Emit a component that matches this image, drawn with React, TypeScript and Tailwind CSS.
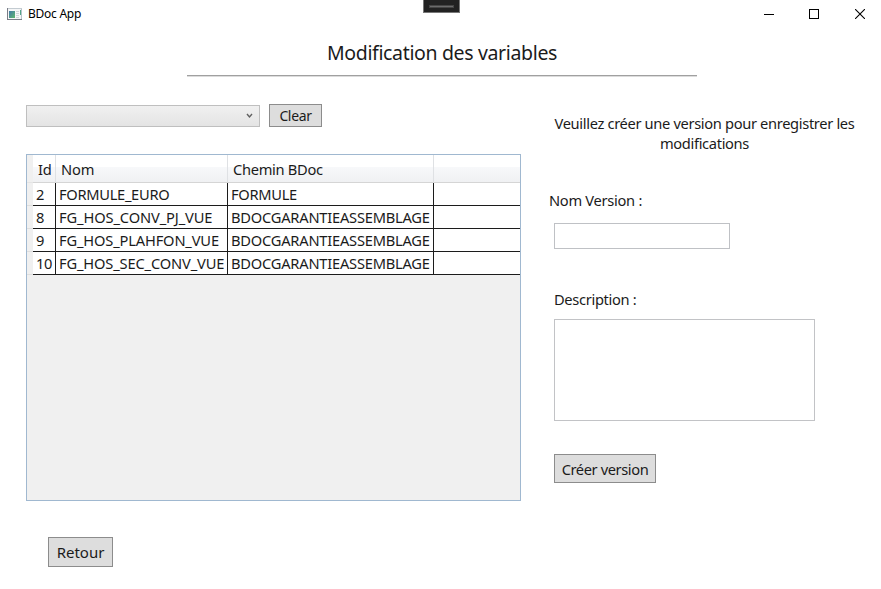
import React from "react";

type Variable = { id: number; nom: string; chemin: string; nomTracking: string; cheminTracking: string };

const variables: Variable[] = [
  { id: 2, nom: "FORMULE_EURO", chemin: "FORMULE", nomTracking: "tracking-[-0.3px]", cheminTracking: "tracking-[-0.3px]" },
  { id: 8, nom: "FG_HOS_CONV_PJ_VUE", chemin: "BDOCGARANTIEASSEMBLAGE", nomTracking: "tracking-[-0.12px]", cheminTracking: "tracking-[-0.22px]" },
  { id: 9, nom: "FG_HOS_PLAHFON_VUE", chemin: "BDOCGARANTIEASSEMBLAGE", nomTracking: "tracking-[-0.16px]", cheminTracking: "tracking-[-0.22px]" },
  { id: 10, nom: "FG_HOS_SEC_CONV_VUE", chemin: "BDOCGARANTIEASSEMBLAGE", nomTracking: "tracking-[-0.15px]", cheminTracking: "tracking-[-0.22px]" },
];

const gridCols = "grid grid-cols-[6px_23px_172px_206px_86px]";
const headCell = "flex items-center border-r border-b border-r-[#dfe1e4] border-b-[#d5d5d5] bg-linear-to-b from-white from-45% via-[#f7f8fa] via-46% to-[#f0f1f3] whitespace-nowrap";
const cell = "flex items-center border-r border-b border-[#1c1c1c] bg-white pl-[3px] whitespace-nowrap";

function TitleBar() {
  return (
    <header className="relative flex h-7 items-center pl-[7px] text-black">
      <svg width="15" height="12" viewBox="0 0 15 12" shapeRendering="crispEdges">
        <defs>
          <linearGradient id="pane" x1="0" y1="0" x2="1" y2="1">
            <stop offset="0" stopColor="#4279a8" />
            <stop offset="1" stopColor="#5fb86d" />
          </linearGradient>
        </defs>
        <rect width="15" height="12" fill="#f5f6f7" />
        <path d="M0 .5H15" stroke="#c3cbd1" />
        <path d="M.5 0V12M0 11.5H15" stroke="#7a7d87" />
        <path d="M14.5 1V11" stroke="#b8c3ca" />
        <rect x="2" y="3" width="6" height="7" fill="url(#pane)" />
        <path d="M9 3.5H12M9 5.5H12M9 7.5H12M9 9.5H12" stroke="#d0d4d8" />
        <rect x="13" y="2" width="1" height="5" fill="#55a58a" />
      </svg>
      <span className="ml-[6px] text-[12px] leading-4 tracking-[-0.25px] whitespace-nowrap">BDoc App</span>
      <div className="absolute top-0 left-[423px] flex h-[13px] w-[37px] items-center justify-center border border-t-0 border-[#777] bg-[#222] pb-px">
        <div className="mt-px h-[3px] w-[25px] border border-[#454545] bg-[#6b6b6b]" />
      </div>
      <div className="mr-4 ml-auto flex gap-[35px]">
        <svg width="10" height="10" viewBox="0 0 10 10" shapeRendering="crispEdges"><path d="M0 5.5H10" stroke="#000" /></svg>
        <svg width="10" height="10" viewBox="0 0 10 10" shapeRendering="crispEdges"><path d="M.5 .5H9.5V9.5H.5Z" fill="none" stroke="#000" /></svg>
        <svg className="ml-px" width="10" height="10" viewBox="0 0 10 10"><path d="M0 0L10 10M10 0L0 10" stroke="#000" strokeWidth="1.1" /></svg>
      </div>
    </header>
  );
}

function VariableTable() {
  return (
    <div className="mt-[27px] h-[347px] w-[495px] border border-[#a0b8d0] bg-[#f0f0f0]">
      <div className={`${gridCols} h-7`}>
        <div className="border-b border-[#e4e4e4]" />
        <div className={`${headCell} pl-[5px] tracking-[-0.2px]`}>Id</div>
        <div className={`${headCell} pl-[5px] tracking-[-0.1px]`}>Nom</div>
        <div className={`${headCell} pl-[5px] tracking-[-0.3px]`}>Chemin BDoc</div>
        <div className={`${headCell} border-r-0`} />
      </div>
      {variables.map((v) => (
        <div key={v.id} className={`${gridCols} h-[23px]`}>
          <div className="border-b border-[#dedede]" />
          <div className={`${cell} tracking-[-0.4px]`}>{v.id}</div>
          <div className={`${cell} ${v.nomTracking}`}>{v.nom}</div>
          <div className={`${cell} ${v.cheminTracking}`}>{v.chemin}</div>
          <div className={`${cell} border-r-0`} />
        </div>
      ))}
    </div>
  );
}

export default function App() {
  return (
    <div className="h-[589px] w-[881px] overflow-hidden bg-white font-['Noto_Sans','Open_Sans',sans-serif] text-[14.67px] leading-5 text-[#1b1b1b]">
      <TitleBar />
      <div className="ml-[187px] flex h-12 w-[510px] justify-center border-b border-[#a0a0a0] pt-[11px] shadow-[0_1px_0_#dcdcdc]">
        <h1 className="text-[19.5px] leading-7 tracking-[-0.35px] whitespace-nowrap">Modification des variables</h1>
      </div>
      <main className="flex">
        <section className="ml-[26px] w-[495px] pt-7">
          <div className="flex gap-[9px]">
            <div className="mt-px flex h-[22px] w-[234px] items-center justify-end border border-[#bfbfbf] bg-linear-to-b from-[#f0f0f0] to-[#e4e4e4] pr-[6px]">
              <svg width="7" height="6" viewBox="0 0 7 6"><path d="M1 1L3.5 4L6 1" fill="none" stroke="#606060" strokeWidth="1.4" /></svg>
            </div>
            <button className="h-[23px] w-[53px] border border-[#8c8c8c] bg-[#ddd] text-[14px] leading-[21px] tracking-[-0.35px]">Clear</button>
          </div>
          <VariableTable />
          <button className="mt-9 ml-[22px] h-[30px] w-[65px] border border-[#8c8c8c] bg-[#ddd] text-[15px]">Retour</button>
        </section>
        <section className="ml-[28px] flex w-[311px] flex-col items-start pt-[37px]">
          <p className="w-full text-center tracking-[-0.34px] whitespace-nowrap">Veuillez créer une version pour enregistrer les<br />modifications</p>
          <label className="mt-[37px] tracking-[-0.29px]">Nom Version :</label>
          <input className="mt-[13px] ml-[5px] h-[26px] w-[176px] border border-[#bfc1c5] bg-white" />
          <label className="mt-[40px] ml-[5px] tracking-[-0.33px]">Description :</label>
          <textarea className="mt-[10px] ml-[5px] h-[102px] w-[261px] resize-none border border-[#c2c3c6] bg-white" />
          <button className="mt-[33px] ml-[5px] h-[29px] w-[102px] border border-[#8c8c8c] bg-[#ddd] tracking-[-0.4px] whitespace-nowrap">Créer version</button>
        </section>
      </main>
    </div>
  );
}
